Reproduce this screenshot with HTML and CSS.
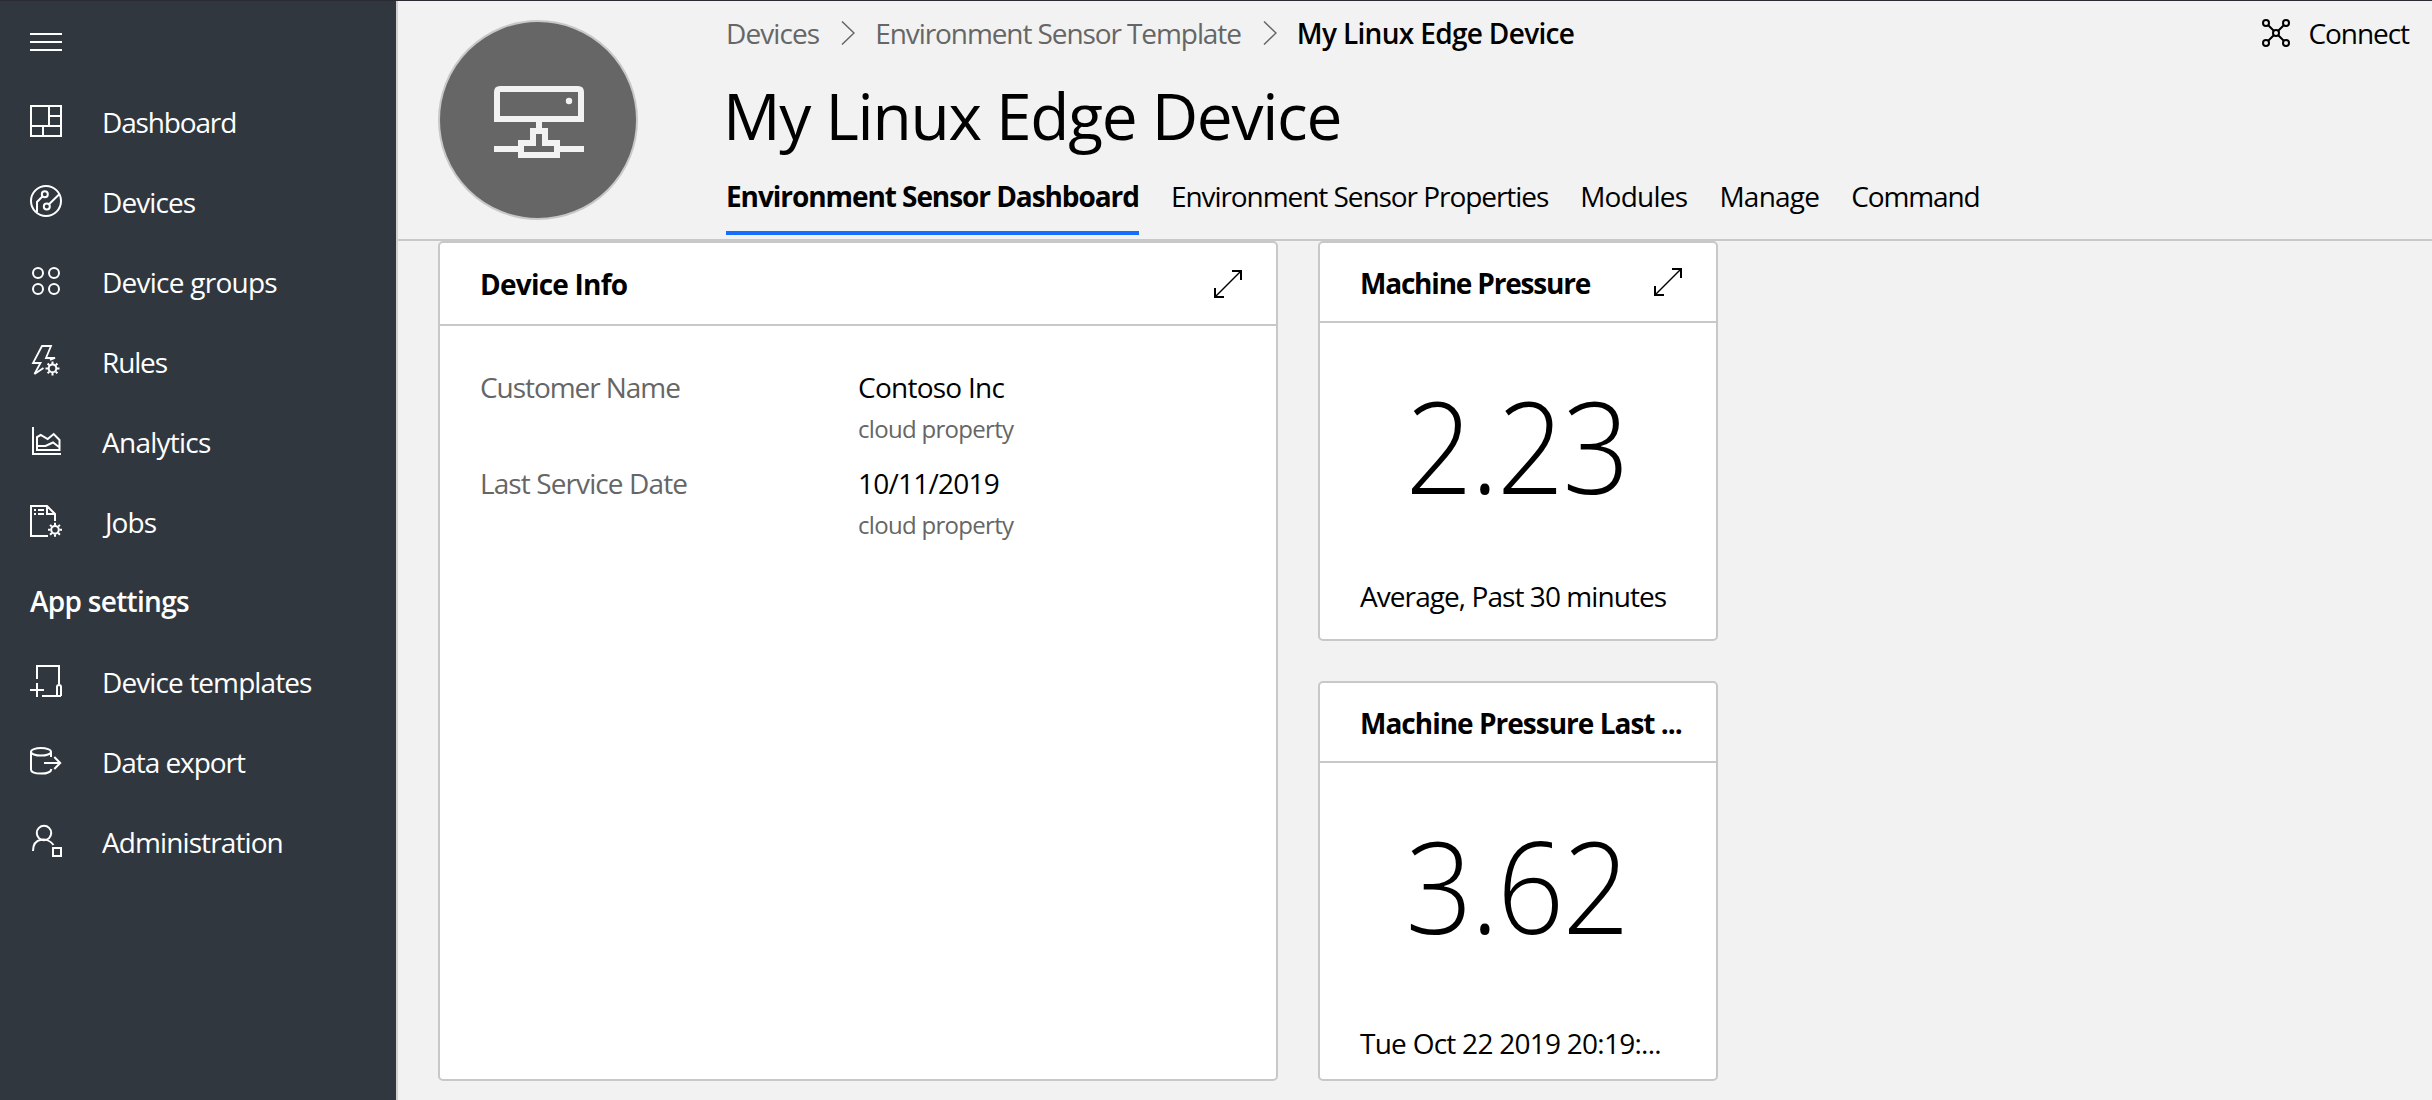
FILE: index.html
```html
<!DOCTYPE html>
<html lang="en">
<head>
<meta charset="utf-8">
<title>My Linux Edge Device</title>
<link rel="stylesheet" href="styles.css">
</head>
<body>
<svg class="defs" aria-hidden="true">
  <symbol id="gear" viewBox="-8 -8 16 16">
    <circle r="3.8"/>
    <path d="M0-4.5V-7M0 4.5V7M-4.5 0H-7M4.5 0H7M-3.2-3.2-4.9-4.9M3.2-3.2 4.9-4.9M-3.2 3.2-4.9 4.9M3.2 3.2 4.9 4.9"/>
  </symbol>
  <symbol id="expand" viewBox="0 0 28 28">
    <path d="M18 1H27V10M1 18V27H10"/>
    <path d="M1 27 27 1" stroke-width="1.4"/>
  </symbol>
</svg>
<div class="app">
  <nav class="sidebar">
    <button class="menu" aria-label="Menu"><svg class="icon" viewBox="0 0 32 18"><path d="M0 1H32M0 9H32M0 17H32"/></svg></button>
    <a class="nav-item"><svg class="icon" viewBox="0 0 32 32"><path d="M1 1H31V31H1ZM1 21H31M19 1V21M19 11H31M13 21V31"/></svg><span class="t-lg">Dashboard</span></a>
    <a class="nav-item"><svg class="icon" viewBox="0 0 32 32"><circle cx="16" cy="16" r="15"/><circle cx="14.8" cy="9.2" r="3"/><circle cx="16.8" cy="21.4" r="3"/><path d="M12.6 11.3 7 17V27M19 19.2 29.3 9.2"/></svg><span class="t-sm">Devices</span></a>
    <a class="nav-item"><svg class="icon" viewBox="0 0 32 32"><circle cx="8" cy="8" r="5"/><circle cx="24" cy="8" r="5"/><circle cx="8" cy="24" r="5"/><circle cx="24" cy="24" r="5"/></svg><span class="t-xs">Device groups</span></a>
    <a class="nav-item"><svg class="icon" viewBox="0 0 32 32"><path d="M20 14.8 25 13H16L21 1H12L3 18H10.5L4.5 29 13.5 23" stroke-width="1.8"/><use href="#gear" x="14.5" y="15.4" width="16" height="16"/></svg><span class="t-lg">Rules</span></a>
    <a class="nav-item"><svg class="icon" viewBox="0 0 32 32"><path d="M3 2V29H31M7 25V12L10.7 10 17.7 14 23.7 9 29.5 15V25ZM7 21H15.5L23 17.5 29 22"/></svg><span class="t-xs">Analytics</span></a>
    <a class="nav-item"><svg class="icon" viewBox="0 0 32 32"><path d="M25 16V9L17 1H1V31H18M17 1V9H25M4 5H6M8 5H14M4 9H6M8 9H14"/><use href="#gear" x="17" y="16.8" width="16" height="16"/></svg><span class="jobs">Jobs</span></a>
    <h2 class="nav-heading">App settings</h2>
    <a class="nav-item"><svg class="icon" viewBox="0 0 32 32"><path d="M7 14V1H29V19M12 31H31M7 18V32M0 25H14M27 31V22a2 2 0 0 1 4 0V31"/></svg><span class="t-sm">Device templates</span></a>
    <a class="nav-item"><svg class="icon" viewBox="0 0 32 32"><ellipse cx="11" cy="6.8" rx="10" ry="3.8"/><path d="M1 7V24.5C1 27 5 28.6 11 28.6S21 27 21.4 24M21 7V12M14 18H30M24.3 12 30.2 18 24.3 24"/></svg><span class="t-md">Data export</span></a>
    <a class="nav-item"><svg class="icon" viewBox="0 0 32 32"><circle cx="14" cy="8" r="7.2"/><path d="M3 26C3 12 18 12 23.5 20M23 23H31V31H23Z"/></svg><span class="t-sm">Administration</span></a>
  </nav>
  <main class="main">
    <header class="header">
      <div class="avatar">
        <svg viewBox="0 0 90 72" width="90" height="72"><path d="M3 33V6Q3 3 6 3H84Q87 3 87 6V33ZM45 36V42M27 57H39V45H51V57H63V69H27ZM0 63H24M66 63H90"/><circle cx="75" cy="15" r="3.2"/></svg>
      </div>
      <div class="heading">
        <div class="crumbs">
          <a class="t-sm">Devices</a>
          <svg class="sep" viewBox="0 0 14 24"><path d="M1 .5 13 12 1 23.5"/></svg>
          <a class="crumb-template">Environment Sensor Template</a>
          <svg class="sep" viewBox="0 0 14 24"><path d="M1 .5 13 12 1 23.5"/></svg>
          <span class="current">My Linux Edge Device</span>
        </div>
        <h1 class="title">My Linux Edge Device</h1>
        <div class="tabs">
          <a class="tab active">Environment Sensor Dashboard</a>
          <a class="tab t-md">Environment Sensor Properties</a>
          <a class="tab t-xs">Modules</a>
          <a class="tab t-xs">Manage</a>
          <a class="tab t-lg">Command</a>
        </div>
      </div>
      <button class="connect"><svg class="icon" viewBox="0 0 28 28"><circle cx="4" cy="4" r="3"/><circle cx="24" cy="4" r="3"/><circle cx="4" cy="24" r="3"/><circle cx="24" cy="24" r="3"/><circle cx="14" cy="14" r="3"/><path d="M6 6 12 12M22 6 16 12M6 22 12 16M22 22 16 16"/></svg><span class="t-md">Connect</span></button>
    </header>
    <section class="board">
      <article class="card">
        <div class="card-head info-head"><h3 class="name-info">Device Info</h3><svg class="expand"><use href="#expand"/></svg></div>
        <dl class="props">
          <dt class="t-md">Customer Name</dt>
          <dd><span class="t-xs">Contoso Inc</span><small>cloud property</small></dd>
          <dt class="t-sm">Last Service Date</dt>
          <dd><span class="t-xs">10/11/2019</span><small>cloud property</small></dd>
        </dl>
      </article>
      <div class="tiles">
        <article class="card tile">
          <div class="card-head"><h3 class="name-pressure">Machine Pressure</h3><svg class="expand"><use href="#expand"/></svg></div>
          <div class="value">2.23</div>
          <p class="note note-average">Average, Past 30 minutes</p>
        </article>
        <article class="card tile">
          <div class="card-head"><h3 class="name-last">Machine Pressure Last ...</h3></div>
          <div class="value">3.62</div>
          <p class="note note-time">Tue Oct 22 2019 20:19:...</p>
        </article>
      </div>
    </section>
  </main>
</div>
</body>
</html>
```
FILE: styles.css
```css
* { box-sizing: border-box; margin: 0; padding: 0; }

body {
  height: 1100px;
  overflow: hidden;
  background: #f2f2f2;
  color: #000;
  font: 28px/40px "Open Sans", "Noto Sans", sans-serif;
}

.defs { display: none; }
svg { display: block; flex: none; fill: none; stroke: currentColor; stroke-width: 2; }
button { border: 0; background: none; color: inherit; font: inherit; }

/* tracking steps */
.t-xs { letter-spacing: -.75px; }
.t-sm { letter-spacing: -.9px; }
.t-md { letter-spacing: -1.06px; }
.t-lg { letter-spacing: -1.15px; }

.app { display: flex; height: 1100px; border-top: 1px solid #2b2b33; }

/* sidebar */
.sidebar {
  width: 398px;
  flex: none;
  border-right: 2px solid #d2d0ce;
  background: #31373f;
  color: #fff;
}
.menu { display: flex; align-items: center; height: 80px; padding: 2px 30px 0; }
.sidebar .icon { width: 32px; }
.nav-item { display: flex; align-items: center; gap: 40px; height: 80px; padding-left: 30px; }
.nav-item .icon { height: 32px; overflow: visible; }
.nav-item span { padding-top: 1px; }
.nav-item .jobs { padding-left: 3px; letter-spacing: -.9px; }
.nav-heading {
  height: 80px;
  padding-left: 30px;
  font-size: 28px;
  font-weight: 600;
  line-height: 80px;
  letter-spacing: -.7px;
}

/* header */
.main { flex: 1; min-width: 0; }
.header {
  display: flex;
  align-items: flex-start;
  height: 240px;
  padding-left: 40px;
  border-bottom: 2px solid #c8c8c8;
}
.avatar {
  display: flex;
  align-items: center;
  justify-content: center;
  flex: none;
  width: 200px;
  height: 200px;
  margin: 19px 88px 0 0;
  padding: 4px 0 0 2px;
  border: 2px solid #c8c8c8;
  border-radius: 50%;
  background: #666;
  color: #f2f2f2;
}
.avatar svg { stroke-width: 6; }
.avatar circle { fill: currentColor; stroke: none; }
.heading { flex: 1; padding-top: 12px; white-space: nowrap; }
.crumbs { display: flex; align-items: center; height: 40px; color: #666; }
.sep { width: 14px; height: 24px; margin: 0 20px 0 22px; stroke-width: 1.5; }
.crumb-template { letter-spacing: -1.09px; }
.current { color: #000; font-weight: 600; letter-spacing: -.67px; }
.title {
  margin: 20px 0 3px -3px;
  font-size: 64px;
  font-weight: 400;
  line-height: 85px;
  letter-spacing: -1.27px;
}
.tabs { display: flex; gap: 32px; }
.tab { height: 74px; line-height: 70px; }
.tab.active {
  border-bottom: 4px solid #146eff;
  font-weight: 700;
  letter-spacing: -1.07px;
}
.connect {
  display: flex;
  align-items: center;
  gap: 18px;
  margin: 12px 23px 0 0;
}
.connect .icon { width: 28px; height: 28px; }

/* dashboard */
.board { display: grid; grid-template-columns: 840px 400px; gap: 40px; padding-left: 40px; }
.tiles { display: flex; flex-direction: column; gap: 40px; }
.card { border: 2px solid #c8c8c8; border-radius: 5px; background: #fff; }
.tile { height: 400px; }
.card-head {
  display: flex;
  align-items: center;
  justify-content: space-between;
  height: 80px;
  padding: 0 34px 0 40px;
  border-bottom: 2px solid #c8c8c8;
}
.info-head { height: 83px; }
.card-head h3 { font-size: 28px; font-weight: 700; white-space: nowrap; }
.tile h3 { padding-top: 2px; }
.name-info { letter-spacing: -.77px; }
.name-pressure { letter-spacing: -1.2px; }
.name-last { letter-spacing: -.99px; }
.expand { width: 28px; height: 28px; }

.props {
  display: grid;
  grid-template-columns: 378px 1fr;
  grid-auto-rows: 96px;
  padding: 41px 0 0 40px;
}
.props dt { color: #666; }
.props dd { display: flex; flex-direction: column; gap: 2px; }
.props small { color: #666; font-size: 24px; letter-spacing: -.7px; }

.value {
  padding: 61px 3px 0 0;
  font-size: 128px;
  font-weight: 300;
  line-height: 121px;
  letter-spacing: -2px;
  text-align: center;
  transform: scaleX(.92);
}
.note { padding-left: 40px; white-space: nowrap; }
.note-average { margin-top: 71px; letter-spacing: -.93px; }
.note-time { margin-top: 78px; letter-spacing: -.74px; }
```
